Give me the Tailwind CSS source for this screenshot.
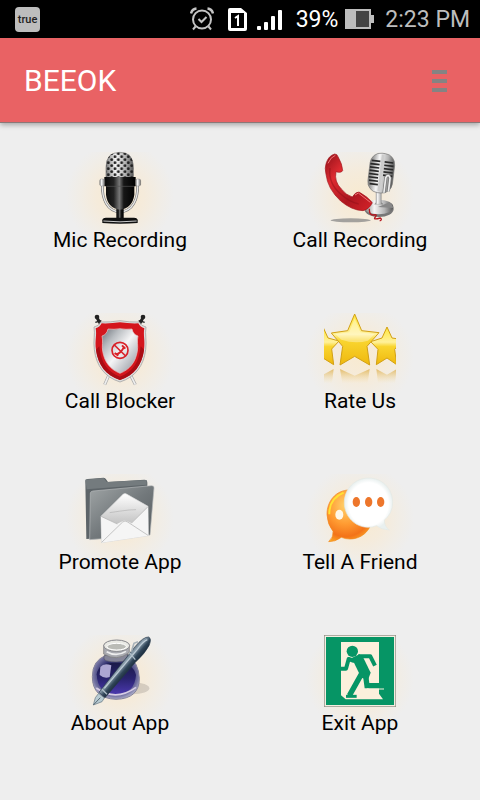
<!DOCTYPE html>
<html lang="en">
<head>
<meta charset="utf-8">
<meta name="viewport" content="width=device-width, initial-scale=1">
<title>BEEOK</title>
<script src="https://cdn.jsdelivr.net/npm/@tailwindcss/browser@4"></script>
</head>
<body class="min-h-screen bg-[#eeeeee] font-[Roboto,sans-serif] text-black">
<div class="flex h-[38px] items-center justify-between bg-black pl-[15px] pr-[10px]">
  <div class="flex size-[25px] items-center justify-center rounded bg-[#bdbdbd] text-[11px] leading-none font-medium text-[#222]">true</div>
  <div class="flex items-center text-[23px] leading-none text-white">
    <svg class="mr-[14px] h-6 w-6" viewBox="0 0 24 24" fill="none" stroke="#c4c4c4" stroke-width="2" aria-label="Alarm"><circle cx="12" cy="12.500" r="9"/><path d="M8.500 12l3 3 5-5M5.500 19.500L3 22.500M18.500 19.500l2.500 3"/><path d="M1 6.500Q2 2 6.500 1.500M17.500 1.500Q22 2 23 6.500" stroke-width="2.500"/></svg>
    <svg class="mr-[10px] h-[23px] w-[19px]" viewBox="0 0 19 23" aria-label="SIM 1"><path fill="#fff" fill-rule="evenodd" d="M0 2Q0 0 2 0H13L19 5V21Q19 23 17 23H2Q0 23 0 21ZM3 5V20H16V5Z"/><path d="M7 10l3-2v10" fill="none" stroke="#fff" stroke-width="2"/></svg>
    <svg class="mr-[13px] mt-[2px] h-[22px] w-[26px]" viewBox="0 0 26 22" fill="#fff" aria-label="Signal"><rect x="0" y="17" width="4" height="4" rx="1"/><rect x="7" y="13" width="4" height="8" rx="1"/><rect x="14" y="7" width="4" height="14" rx="1"/><rect x="21" y="1" width="4" height="20" rx="1"/></svg>
    <span class="mr-[7px]">39%</span>
    <svg class="mr-[11px] h-5 w-[29px]" viewBox="0 0 29 20" aria-label="Battery"><path fill="#bdbdbd" d="M0 0H26V6H29V14H26V20H0Z"/><path fill="#444" d="M11 2H24V18H11Z"/></svg>
    <span class="text-[#bdbdbd]">2:23 PM</span>
  </div>
</div>
<header class="flex h-[85px] items-center justify-between border-b border-[#8b7777] bg-[#e96264] pt-[2px] pr-[29px] pl-6 shadow-[0_2px_5px_rgba(0,0,0,0.3)]">
  <h1 class="text-[30px] leading-9 text-white">BEEOK</h1>
  <button aria-label="Menu" class="flex w-6 justify-center"><svg class="h-[22px] w-[15px]" viewBox="0 0 15 22" fill="#858383"><path d="M0 0H15V4H0ZM0 9H15V13H0ZM0 18H15V22H0Z"/></svg></button>
</header>
<main class="grid auto-rows-[161px] grid-cols-2 pt-[29px]">
  <button class="flex flex-col items-center bg-[radial-gradient(circle_at_50%_44px,#f8ead0_0,#f5ebdb_24px,#f1ede6_40px,#eeeeee_54px)] text-[21px] leading-8">
    <svg class="size-[72px] overflow-visible" viewBox="42 36 216 216">
      <defs>
        <linearGradient id="silver" x2="1"><stop stop-color="#777"/><stop offset=".35" stop-color="#f6f6f6"/><stop offset=".7" stop-color="#b5b5b5"/><stop offset="1" stop-color="#555"/></linearGradient>
        <linearGradient id="black" x2="1"><stop stop-color="#080808"/><stop offset=".3" stop-color="#222"/><stop offset=".48" stop-color="#777"/><stop offset=".62" stop-color="#161616"/><stop offset="1"/></linearGradient>
        <pattern id="mesh" width="20" height="18" patternUnits="userSpaceOnUse"><circle cx="5" cy="5" r="4.300" fill="#222"/><circle cx="15" cy="14" r="4.300" fill="#222"/></pattern>
      </defs>
      <path d="M97 130C95 180 113 214 150 216C187 214 205 180 203 130" fill="none" stroke="#777" stroke-width="8"/>
      <path d="M97 130C95 180 113 214 150 216C187 214 205 180 203 130" fill="none" stroke="#e8e8e8" stroke-width="4"/>
      <path d="M108 112V82Q108 37 150 37Q190 37 190 82V112Z" fill="url(#silver)" stroke="#777" stroke-width="2"/>
      <path d="M108 112V82Q108 37 150 37Q190 37 190 82V112Z" fill="url(#mesh)"/>
      <path d="M139 203H161V235H139Z" fill="url(#black)"/>
      <path d="M103 111H197V139H193V164Q187 205 150 209Q113 205 108 164V139H103Z" fill="url(#black)"/>
      <path d="M109 139H192" stroke="#555" stroke-width="2"/>
      <rect x="89" y="117" width="15" height="21" rx="5" fill="url(#silver)" stroke="#777"/><rect x="197" y="117" width="15" height="21" rx="5" fill="url(#silver)" stroke="#777"/>
      <path d="M97 241Q97 233 108 233H192Q203 233 203 241V249Q150 254 97 249Z" fill="#101010"/><path d="M100 243Q150 248 200 243" stroke="#ccc" stroke-width="3" fill="none"/>
    </svg>
    <span>Mic Recording</span>
  </button>
  <button class="flex flex-col items-center bg-[radial-gradient(circle_at_50%_44px,#f8ead0_0,#f5ebdb_24px,#f1ede6_40px,#eeeeee_54px)] text-[21px] leading-8">
    <svg class="size-[72px] overflow-visible" viewBox="42 36 216 216">
      <defs><linearGradient id="red" x2="1" y2="1"><stop stop-color="#8f1018"/><stop offset=".3" stop-color="#df2b31"/><stop offset=".65" stop-color="#ad1720"/><stop offset="1" stop-color="#d62228"/></linearGradient></defs>
      <ellipse cx="122" cy="241" rx="60" ry="6" fill="#888" opacity=".75"/>
      <ellipse cx="207" cy="207" rx="44" ry="24" fill="#777"/><ellipse cx="206" cy="201" rx="44" ry="22" fill="url(#silver)"/><path d="M204 201L238 187Q249 195 249 204Z" fill="#888"/>
      <path d="M198 150H214V187L219 193H194L198 187Z" fill="url(#silver)" stroke="#888"/>
      <g transform="rotate(7 215 98)"><rect x="177" y="40" width="74" height="119" rx="32" fill="url(#silver)" stroke="#777" stroke-width="2"/>
      <path d="M181 65H207M178 75H206M178 85H206M178 95H206M178 105H206M178 115H206M180 125H207M183 135H208M220 65H246M220 75H248M220 85H248M220 95H248M220 105H248" stroke="#292929" stroke-width="5"/><path d="M213 44V154" stroke="#ccc" stroke-width="8"/><path d="M229 157V111Q235 96 242 111V151" fill="none" stroke="#777" stroke-width="9"/><path d="M229 157V111Q235 96 242 111V151" fill="none" stroke="#eee" stroke-width="5"/></g>
      <path d="M178 206Q177 226 190 225Q204 222 196 231Q187 241 211 234Q218 239 209 243" fill="none" stroke="#b51820" stroke-width="4"/>
      <path d="M49 68Q56 47 74 42Q82 42 84 50Q97 72 98 92Q93 100 78 95Q72 125 94 147Q109 166 127 171Q137 155 147 156Q173 170 187 188Q178 207 159 212Q125 211 92 183Q53 147 48 103Q43 84 49 68Z" fill="url(#red)" stroke="#a0151c" stroke-width="2"/>
      <path d="M54 70Q62 51 76 46M135 165L145 159L181 187" fill="none" stroke="#ef7477" stroke-width="3"/><path d="M60 84Q54 130 93 163Q119 187 146 192" fill="none" stroke="#8f1018" stroke-width="4" opacity=".5"/>
    </svg>
    <span>Call Recording</span>
  </button>
  <button class="flex flex-col items-center bg-[radial-gradient(circle_at_50%_44px,#f8ead0_0,#f5ebdb_24px,#f1ede6_40px,#eeeeee_54px)] text-[21px] leading-8">
    <svg class="size-[72px] overflow-visible" viewBox="42 39 216 216">
      <defs><linearGradient id="steel" x2="1" y2="1"><stop stop-color="#6a7078"/><stop offset=".25" stop-color="#b9bdc1"/><stop offset=".5" stop-color="#f5f5f6"/><stop offset="1" stop-color="#878c96"/></linearGradient></defs>
      <path d="M104 254L118 222M196 254L180 222" stroke="#aaa" stroke-width="9"/><path d="M104 254L118 222M196 254L180 222" stroke="#eee" stroke-width="5"/>
      <path d="M82 55L95 78M218 55L205 78" stroke="#222" stroke-width="9"/><circle cx="81" cy="51" r="7" fill="#222"/><circle cx="219" cy="51" r="7" fill="#222"/><path d="M76 67L94 62M224 67L206 62" stroke="#222" stroke-width="4"/>
      <path d="M150 62Q177 67 208 66Q214 79 228 81C224 104 231 121 227 149C221 198 196 231 150 246C104 231 79 198 73 149C69 121 76 104 72 81Q86 79 92 66Q123 67 150 62Z" fill="#ddd" stroke="#999" stroke-width="2"/>
      <path d="M150 67Q178 71 205 70Q211 82 223 85C219 106 226 123 222 149C216 195 192 226 150 240C108 226 84 195 78 149C74 123 81 106 77 85Q89 82 95 70Q122 71 150 67Z" fill="#d4161d"/>
      <path d="M78 149C84 195 108 226 150 240C192 226 216 195 222 149L212 139C208 188 186 217 150 230C114 217 92 188 88 139Z" fill="#a90d14"/>
      <path d="M150 86Q168 89 186 87Q190 104 204 108C200 124 205 137 202 154C196 188 179 208 150 220C121 208 104 188 98 154C95 137 100 124 96 108Q110 104 114 87Q132 89 150 86Z" fill="url(#steel)" stroke="#e7c9ca" stroke-width="2"/>
      <circle cx="150" cy="151" r="24" fill="none" stroke="#d92128" stroke-width="5"/><path d="M133 135L167 168" stroke="#d92128" stroke-width="5"/><path d="M137 163Q152 162 163 139M134 159L145 167M156 136L166 146" stroke="#d92128" stroke-width="6" fill="none"/>
    </svg>
    <span>Call Blocker</span>
  </button>
  <button class="flex flex-col items-center bg-[radial-gradient(circle_at_50%_44px,#f8ead0_0,#f5ebdb_24px,#f1ede6_40px,#eeeeee_54px)] text-[21px] leading-8">
    <svg class="size-[72px]" viewBox="42 39 216 216">
      <defs><linearGradient id="gold" x2="0" y2="1"><stop stop-color="#ffe638"/><stop offset=".4" stop-color="#fff19b"/><stop offset=".52" stop-color="#f9d52f"/><stop offset="1" stop-color="#efb80e"/></linearGradient><linearGradient id="fade" x2="0" y2="1"><stop stop-color="#d9a63a" stop-opacity=".7"/><stop offset="1" stop-color="#f5dc9c" stop-opacity="0"/></linearGradient></defs>
      <g fill="url(#gold)" stroke="#d2a014" stroke-width="3" stroke-linejoin="round"><path d="M39 81L54 114L87 123L65 147L71 194L39 174L5 194V118L28 114Z"/><path d="M231 81L246 114L280 119L254 148L260 194L231 174L199 194L204 148L182 125L216 114Z"/><path d="M134 42L155 92L207 98L171 139L179 195L134 169L90 195L98 139L64 99L113 92Z"/></g>
      <path d="M134 55L151 97L194 102L174 122Q135 133 94 119L76 102L118 97Z" fill="#fff" opacity=".35"/>
      <g fill="url(#fade)"><path d="M90 207L134 227L179 207L173 250H97Z"/><path d="M39 224L71 207L66 250H39ZM199 207L231 224L260 207L255 250H204Z"/></g>
    </svg>
    <span>Rate Us</span>
  </button>
  <button class="flex flex-col items-center bg-[radial-gradient(circle_at_50%_44px,#f8ead0_0,#f5ebdb_24px,#f1ede6_40px,#eeeeee_54px)] text-[21px] leading-8">
    <svg class="size-[72px] overflow-visible" viewBox="42 27 216 216">
      <defs><linearGradient id="folder" x2="1" y2="1"><stop stop-color="#a0a5a6"/><stop offset=".5" stop-color="#73797c"/><stop offset="1" stop-color="#53595c"/></linearGradient><linearGradient id="inside" x2="0" y2="1"><stop stop-color="#fff"/><stop offset=".7" stop-color="#bbb"/></linearGradient></defs>
      <path d="M46 48Q46 42 53 42L101 38Q106 38 108 43L114 51L223 44Q232 44 232 53V210L49 222Z" fill="#5d6468"/><path d="M46 44L101 39L110 51L230 45V59L50 73Z" fill="#747b7e"/>
      <path d="M61 84Q62 79 69 78L245 62Q253 62 252 69L240 210L59 224Z" fill="url(#folder)" stroke="#b6babb" stroke-width="2"/>
      <path d="M93 154L160 87Q166 84 171 88L234 124L235 212L95 233Z" fill="url(#inside)" stroke="#ddd" stroke-width="2"/>
      <path d="M119 143Q150 138 177 135L198 134" stroke="#888" fill="none"/>
      <path d="M93 154L142 176L159 168Q165 164 172 169L184 174L234 125L235 212L95 233Z" fill="#f5f5f5"/><path d="M95 232L158 171Q165 165 173 171L234 211M93 154L142 177M234 125L184 175" fill="none" stroke="#aaa" stroke-width="2"/>
    </svg>
    <span>Promote App</span>
  </button>
  <button class="flex flex-col items-center bg-[radial-gradient(circle_at_50%_44px,#f8ead0_0,#f5ebdb_24px,#f1ede6_40px,#eeeeee_54px)] text-[21px] leading-8">
    <svg class="size-[72px] overflow-visible" viewBox="42 27 216 216">
      <defs><radialGradient id="orange" cx=".4" cy=".3" r=".8"><stop stop-color="#ffd16c"/><stop offset=".45" stop-color="#ff9b32"/><stop offset=".75" stop-color="#f37319"/><stop offset="1" stop-color="#ffb829"/></radialGradient><radialGradient id="white"><stop stop-color="#fff"/><stop offset=".82" stop-color="#fff"/><stop offset="1" stop-color="#e9f0ef"/></radialGradient></defs>
      <path d="M69 199Q52 177 51 149C50 109 78 75 118 75C158 75 188 107 188 149C188 193 157 222 120 222Q106 222 94 217Q75 231 56 230Q71 217 69 199Z" fill="url(#orange)" stroke="#f18a1c" stroke-width="2"/>
      <path d="M58 148Q57 101 101 83" fill="none" stroke="#ffe233" stroke-width="6"/><ellipse cx="88" cy="149" rx="12" ry="15" fill="#fff7e8"/>
      <path d="M223 165Q223 184 238 195Q213 194 200 182Q188 187 175 187C135 187 103 154 103 113C103 71 135 39 176 39C217 39 248 71 248 112Q248 146 223 165Z" fill="url(#white)" stroke="#e4e8e4" stroke-width="2"/>
      <g fill="#ed762b"><ellipse cx="139" cy="111" rx="11" ry="15"/><ellipse cx="176" cy="111" rx="11" ry="15"/><ellipse cx="212" cy="111" rx="11" ry="15"/></g>
    </svg>
    <span>Tell A Friend</span>
  </button>
  <button class="flex flex-col items-center bg-[radial-gradient(circle_at_50%_44px,#f8ead0_0,#f5ebdb_24px,#f1ede6_40px,#eeeeee_54px)] text-[21px] leading-8">
    <svg class="size-[72px] overflow-visible" viewBox="42 30 216 216">
      <defs><radialGradient id="glass" cx=".5" cy=".45" r=".6"><stop stop-color="#171a43"/><stop offset=".55" stop-color="#30306f"/><stop offset=".8" stop-color="#7776a4"/><stop offset="1" stop-color="#ccccde"/></radialGradient><linearGradient id="ink" x2="0" y2="1"><stop stop-color="#1b1b48"/><stop offset=".5" stop-color="#29236e"/><stop offset="1" stop-color="#4a38ad"/></linearGradient><linearGradient id="pen" x1="0" y1="0" x2="1" y2="1"><stop offset=".38" stop-color="#202d3d"/><stop offset=".46" stop-color="#8fa2b0"/><stop offset=".52" stop-color="#304558"/><stop offset=".6" stop-color="#101e2d"/></linearGradient></defs>
      <ellipse cx="188" cy="190" rx="50" ry="18" fill="#77716c" opacity=".25"/>
      <path d="M110 91Q67 105 67 155Q67 220 138 223Q208 221 208 160Q206 112 172 91Z" fill="url(#glass)" stroke="#85839b" stroke-width="3"/>
      <path d="M80 148Q84 113 137 113Q190 113 198 150Q194 207 137 207Q83 207 80 148Z" fill="url(#ink)"/><path d="M91 126Q101 113 124 121L119 156Q103 162 89 150Z" fill="#aca6d3"/><path d="M79 189Q137 231 198 187" fill="none" stroke="#d6cce5" stroke-width="5"/>
      <path d="M103 91Q99 103 108 107Q141 116 174 105L173 87Z" fill="#868698" stroke="#555568" stroke-width="2"/>
      <path d="M101 61V87Q139 111 178 83V61Z" fill="#a9aab0" stroke="#777" stroke-width="2"/><ellipse cx="140" cy="62" rx="39" ry="17" fill="#e9e9e4" stroke="#85858a" stroke-width="3"/><ellipse cx="140" cy="65" rx="29" ry="10" fill="#babbb6" stroke="#fff" stroke-width="3"/><path d="M110 80Q139 97 168 79" fill="none" stroke="#eee" stroke-width="5"/>
      <path d="M87 202L195 65Q220 35 236 36Q246 41 237 62Q225 85 196 112L105 218Z" fill="url(#pen)" stroke="#26384a" stroke-width="2"/><path d="M103 190L202 73Q219 49 232 44" fill="none" stroke="#bdcbd5" stroke-width="4"/>
      <path d="M178 83L196 104M96 193L111 208" stroke="#aebdc7" stroke-width="4"/><path d="M86 205L103 219L96 230L70 240L76 218Z" fill="#b8cbd2" stroke="#60737e" stroke-width="2"/><path d="M71 239L91 218" stroke="#263746" stroke-width="2"/><path d="M184 80L192 55L204 50" fill="none" stroke="#a8b2b9" stroke-width="5"/>
    </svg>
    <span>About App</span>
  </button>
  <button class="flex flex-col items-center bg-[radial-gradient(circle_at_50%_44px,#f8ead0_0,#f5ebdb_24px,#f1ede6_40px,#eeeeee_54px)] text-[21px] leading-8">
    <svg class="size-[72px]" viewBox="42 30 216 216">
      <rect x="43" y="31" width="214" height="214" fill="#f4eee0" stroke="#8b8b82" stroke-width="2"/><rect x="48" y="36" width="204" height="204" fill="#069565"/>
      <path d="M93 51H207V206L219 223H107L93 211Z" fill="#fbf0dc"/>
      <g fill="none" stroke="#069565"><circle cx="127" cy="79" r="17" fill="#069565" stroke="none"/><path d="M133 108L116 102L108 131H93M145 94H181L195 122" stroke-width="12" stroke-linejoin="round"/><path d="M125 99L148 88L160 98L182 143L174 164L154 158Z" fill="#069565" stroke="none"/><path d="M157 142L118 212M166 145L171 182H219" stroke-width="16"/><path d="M108 214H140" stroke-width="9"/></g>
      <path d="M176 174H219V190H176Z" fill="#069565"/><path d="M171 192H222" stroke="#fbf0dc" stroke-width="3"/>
    </svg>
    <span>Exit App</span>
  </button>
</main>
</body>
</html>
